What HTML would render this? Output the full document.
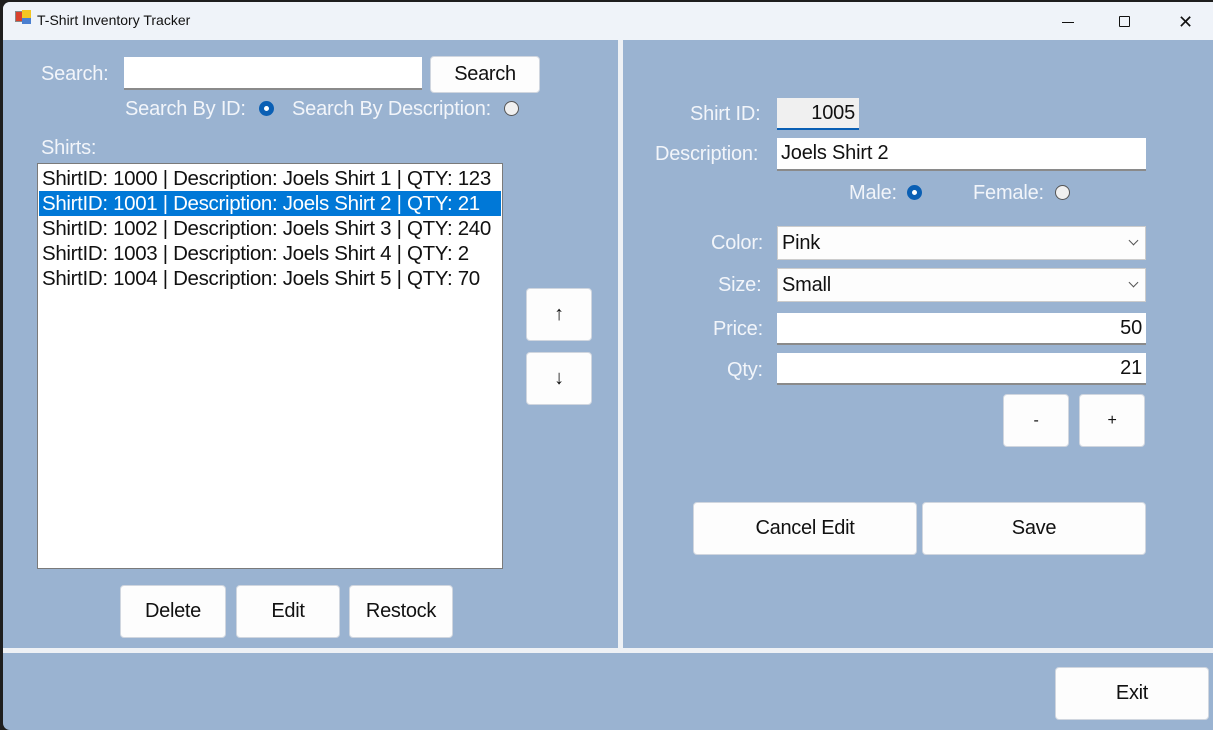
<!DOCTYPE html>
<html><head><meta charset="utf-8"><style>
*{box-sizing:border-box;margin:0;padding:0}
body{width:1213px;height:730px;background:#1e1e1e;position:relative;overflow:hidden;font-family:"Liberation Sans",sans-serif;}
.win{position:absolute;left:3px;top:2px;width:1210px;height:728px;background:#9ab3d1;border-radius:7px 0 0 7px;overflow:hidden}
.title{position:absolute;left:0;top:0;width:100%;height:38px;background:#eff3f9}
.a{position:absolute}
.lbl{position:absolute;color:#f2f5fa;font-size:20px;white-space:nowrap;letter-spacing:-0.2px}
.btn{position:absolute;background:#fdfdfd;border:1px solid #d0d6df;border-radius:4px;font-size:20px;color:#111;display:flex;align-items:center;justify-content:center;letter-spacing:-0.3px}
.tb{position:absolute;background:#fff;border-bottom:2px solid #8a8a8a;font-size:20px;color:#111;padding:0 4px;display:flex;align-items:center;letter-spacing:-0.2px}
.rad{position:absolute;width:15px;height:15px;border-radius:50%}
.on{background:#fff;border:5px solid #0a5fb4}
.off{background:#f0f0f0;border:1px solid #555}
.row{height:25px;line-height:26px;font-size:20.5px;padding-left:3px;color:#111;white-space:nowrap;letter-spacing:-0.33px}
.sel{background:#0078d7;color:#fff}
.chev{position:absolute;right:8px;top:10px;width:7px;height:7px;border-right:1px solid #555;border-bottom:1px solid #555;transform:rotate(45deg)}
</style></head><body>
<div class="win">
 <div class="title">
  <div class="a" style="left:12px;top:9px;width:8px;height:11px;background:#d9412c;border:1px solid #888"></div>
  <div class="a" style="left:19px;top:8px;width:9px;height:8px;background:#f3c522"></div>
  <div class="a" style="left:19px;top:16px;width:9px;height:6px;background:#4a7fd0"></div>
  <div class="a" style="left:34px;top:10px;font-size:14px;color:#111">T-Shirt Inventory Tracker</div>
  <div class="a" style="left:1059px;top:20px;width:12px;height:1px;background:#111"></div>
  <div class="a" style="left:1116px;top:14px;width:11px;height:11px;border:1px solid #111;border-radius:1px"></div>
  <div class="a" style="left:1175px;top:12px;font-size:18px;color:#111;line-height:16px">✕</div>
 </div>
 <div class="a" style="left:615px;top:38px;width:5px;height:608px;background:#eef1f5"></div>
 <div class="a" style="left:0;top:646px;width:1210px;height:5px;background:#eef1f5"></div>

 <div class="lbl" style="left:38px;top:61px">Search:</div>
 <div class="tb" style="left:121px;top:55px;width:298px;height:33px"></div>
 <div class="btn" style="left:427px;top:54px;width:110px;height:37px">Search</div>
 <div class="lbl" style="left:122px;top:96px">Search By ID:</div>
 <div class="rad on" style="left:256px;top:99px"></div>
 <div class="lbl" style="left:289px;top:96px">Search By Description:</div>
 <div class="rad off" style="left:501px;top:99px"></div>
 <div class="lbl" style="left:38px;top:135px">Shirts:</div>
 <div class="a" style="left:34px;top:161px;width:466px;height:406px;background:#fff;border:1px solid #7a7a7a;padding:2px 1px">
  <div class="row">ShirtID: 1000 | Description: Joels Shirt 1 | QTY: 123</div>
  <div class="row sel">ShirtID: 1001 | Description: Joels Shirt 2 | QTY: 21</div>
  <div class="row">ShirtID: 1002 | Description: Joels Shirt 3 | QTY: 240</div>
  <div class="row">ShirtID: 1003 | Description: Joels Shirt 4 | QTY: 2</div>
  <div class="row">ShirtID: 1004 | Description: Joels Shirt 5 | QTY: 70</div>
 </div>
 <div class="btn" style="left:523px;top:286px;width:66px;height:53px">↑</div>
 <div class="btn" style="left:523px;top:350px;width:66px;height:53px">↓</div>
 <div class="btn" style="left:117px;top:583px;width:106px;height:53px">Delete</div>
 <div class="btn" style="left:233px;top:583px;width:104px;height:53px">Edit</div>
 <div class="btn" style="left:346px;top:583px;width:104px;height:53px">Restock</div>

 <div class="lbl" style="left:687px;top:101px">Shirt ID:</div>
 <div class="tb" style="left:774px;top:96px;width:82px;height:32px;background:#f0f0f0;border-bottom:2px solid #0a5fb4;justify-content:flex-end">1005</div>
 <div class="lbl" style="left:652px;top:141px">Description:</div>
 <div class="tb" style="left:774px;top:136px;width:369px;height:33px">Joels Shirt 2</div>
 <div class="lbl" style="left:846px;top:180px">Male:</div>
 <div class="rad on" style="left:904px;top:183px"></div>
 <div class="lbl" style="left:970px;top:180px">Female:</div>
 <div class="rad off" style="left:1052px;top:183px"></div>
 <div class="lbl" style="left:708px;top:230px">Color:</div>
 <div class="tb" style="left:774px;top:224px;width:369px;height:34px;border:1px solid #ccc;background:#fdfdfd">Pink<div class="chev"></div></div>
 <div class="lbl" style="left:715px;top:272px">Size:</div>
 <div class="tb" style="left:774px;top:266px;width:369px;height:34px;border:1px solid #ccc;background:#fdfdfd">Small<div class="chev"></div></div>
 <div class="lbl" style="left:710px;top:316px">Price:</div>
 <div class="tb" style="left:774px;top:311px;width:369px;height:32px;justify-content:flex-end">50</div>
 <div class="lbl" style="left:724px;top:357px">Qty:</div>
 <div class="tb" style="left:774px;top:351px;width:369px;height:32px;justify-content:flex-end">21</div>
 <div class="btn" style="left:1000px;top:392px;width:66px;height:53px;font-size:16px">-</div>
 <div class="btn" style="left:1076px;top:392px;width:66px;height:53px;font-size:16px">+</div>
 <div class="btn" style="left:690px;top:500px;width:224px;height:53px">Cancel Edit</div>
 <div class="btn" style="left:919px;top:500px;width:224px;height:53px">Save</div>
 <div class="btn" style="left:1052px;top:665px;width:154px;height:53px">Exit</div>
</div>
</body></html>
